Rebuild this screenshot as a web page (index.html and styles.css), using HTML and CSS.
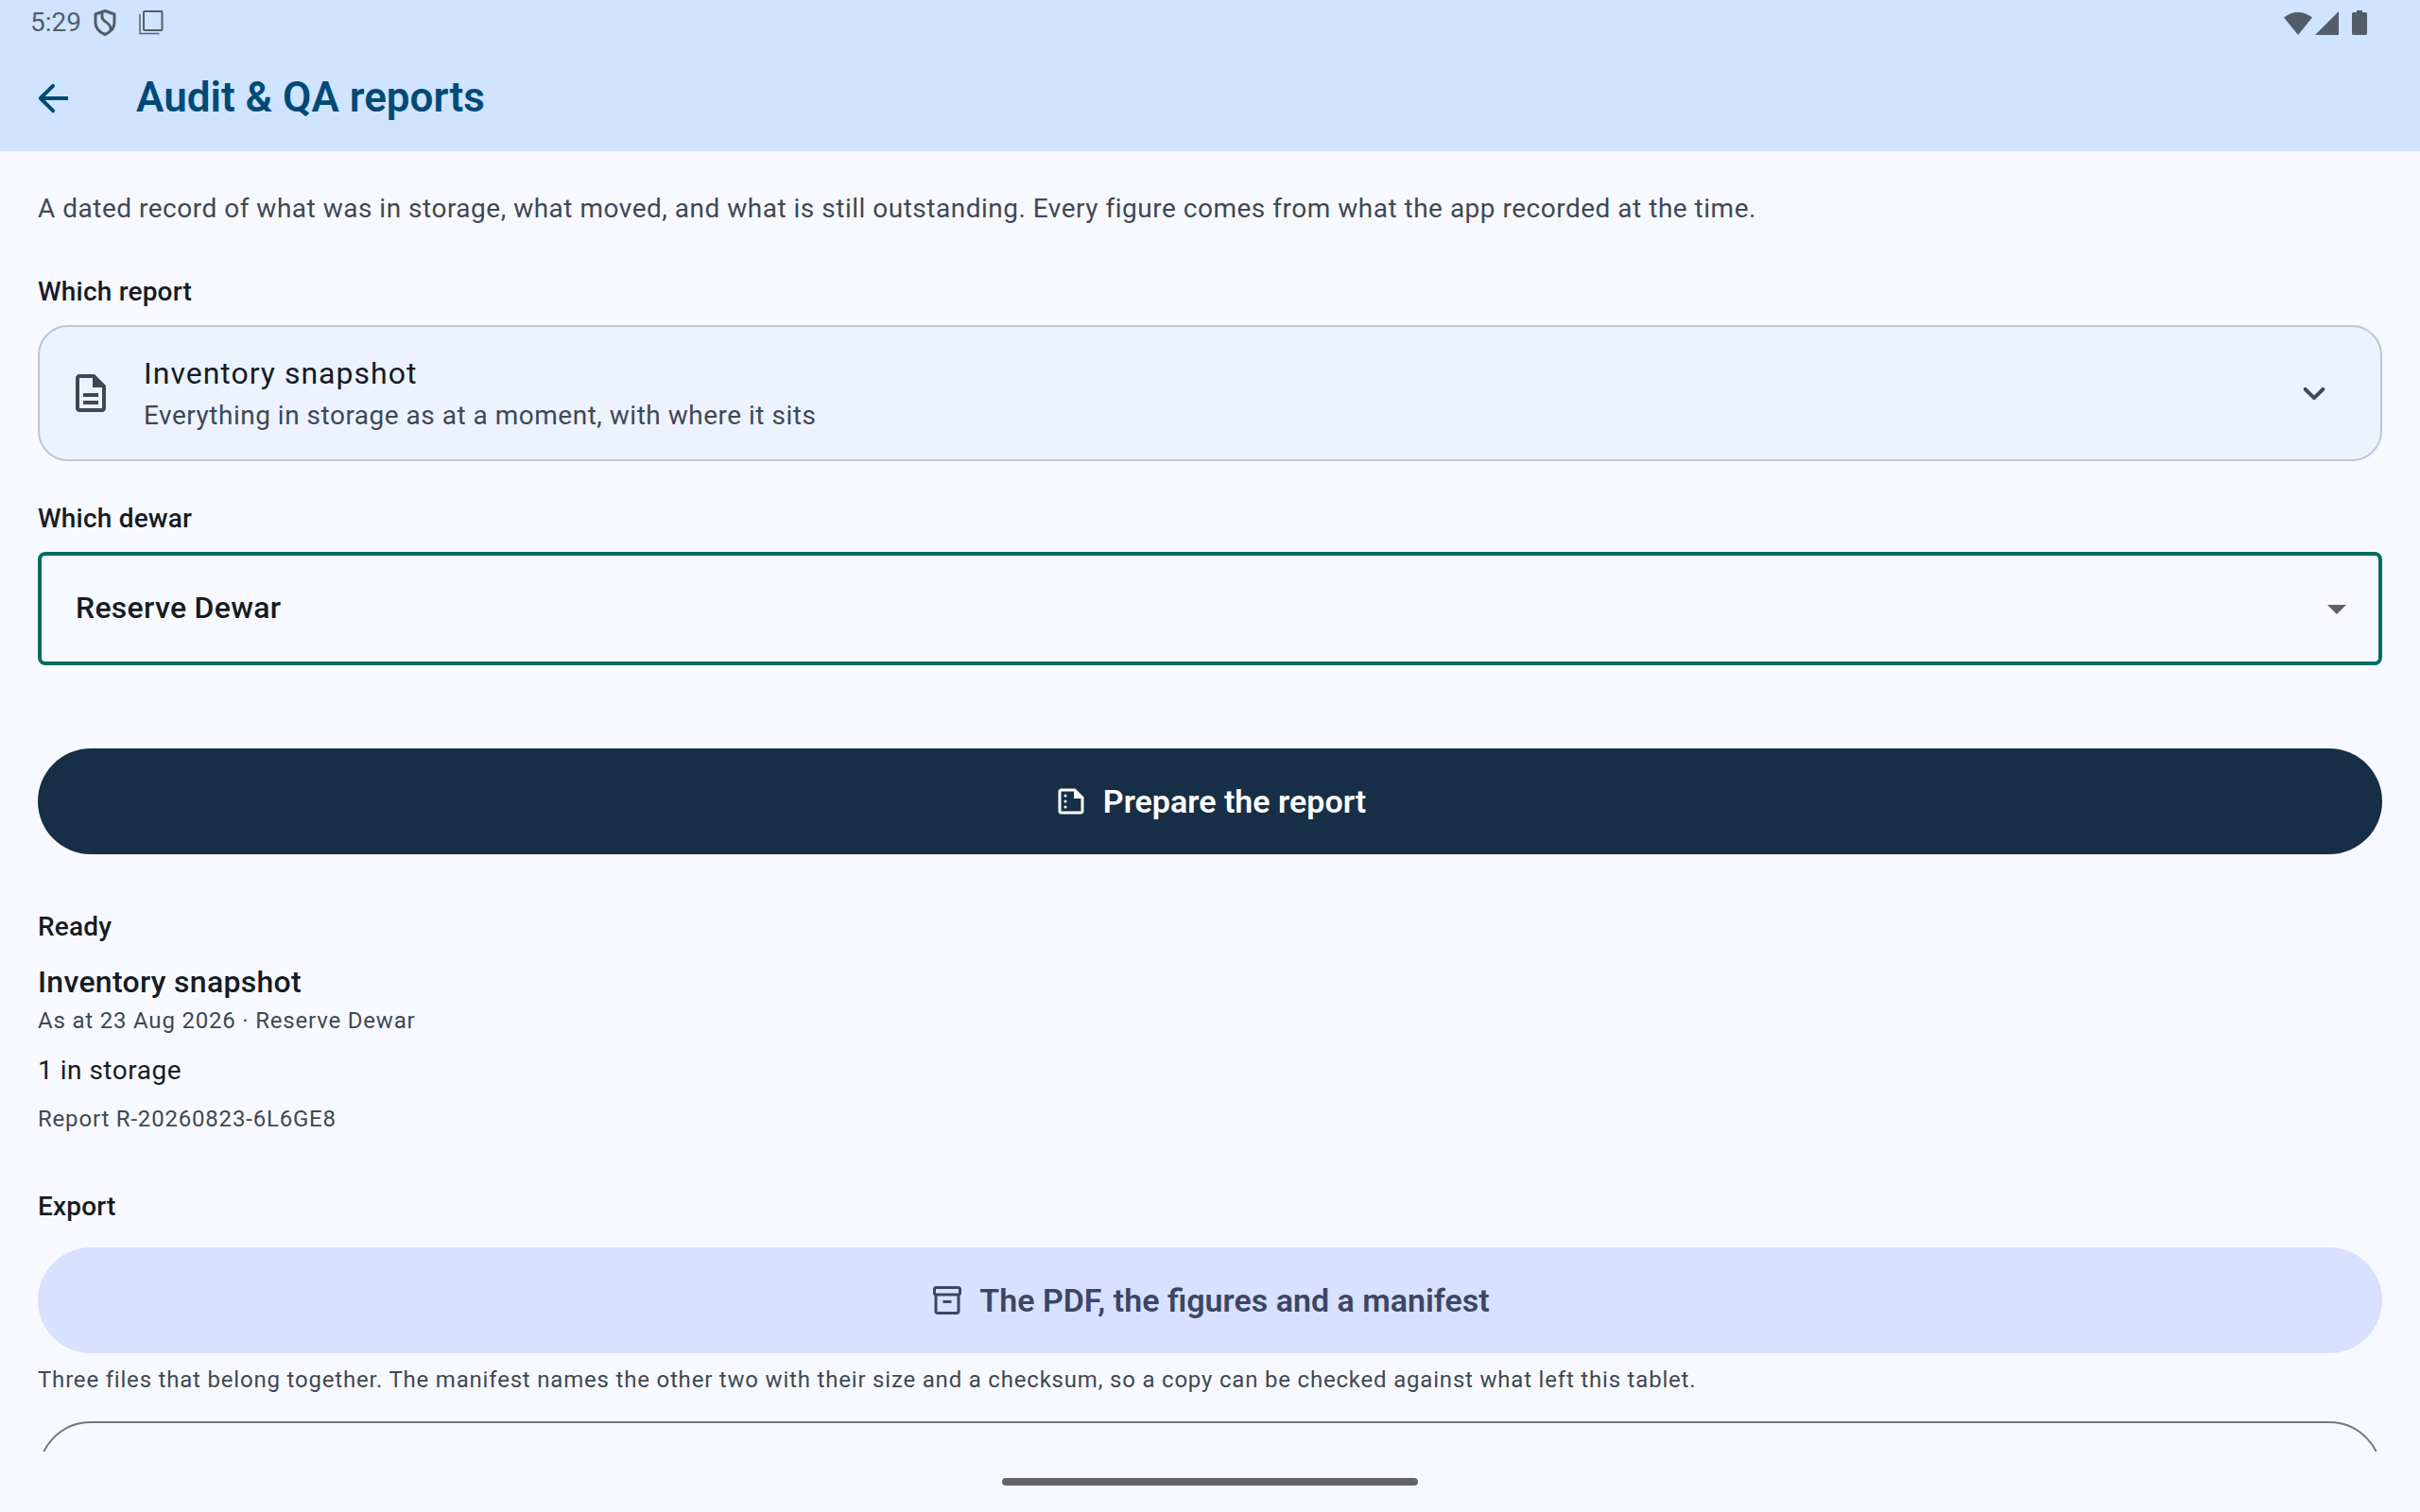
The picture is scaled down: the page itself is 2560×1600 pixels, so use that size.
FILE: index.html
```html
<!DOCTYPE html>
<html lang="en">
<head>
<meta charset="utf-8">
<meta name="viewport" content="width=device-width, initial-scale=1">
<title>Audit &amp; QA reports</title>
<link rel="stylesheet" href="styles.css">
</head>
<body>
<header class="top">
  <div class="status">
    <div class="status-group">
      <span class="clock">5:29</span>
      <svg class="shield" viewBox="0 0 24 28" fill="none" stroke="currentColor" stroke-width="3" stroke-linejoin="round" aria-hidden="true"><path d="M12 1.500 22 5v9c0 5.500-4 10-10 12.500C6 24 2 19.500 2 14V5z"/><path d="M9 3v5c0 5 9 6 9 12v2"/></svg>
      <svg class="copies" viewBox="0 0 26 28" fill="none" stroke="currentColor" aria-hidden="true"><rect x="5" y="2" width="19.500" height="20" rx="1" stroke-width="2"/><path d="M1 5v20.500h20.500" stroke-width="1.500"/></svg>
    </div>
    <div class="status-group signals">
      <svg class="wifi" viewBox="0 0 30 28" fill="currentColor" aria-hidden="true"><path d="M0 8.500C8.500 1 21.500 1 30 8.500L15 27z"/></svg>
      <svg class="cell" viewBox="0 0 26 28" fill="currentColor" aria-hidden="true"><path d="M0 27 25 2v25z"/></svg>
      <svg class="battery" viewBox="0 0 16 28" fill="currentColor" aria-hidden="true"><path d="M5 1h6v2h3.500Q16 3 16 4.500v21q0 1.500-1.500 1.500h-13Q0 27 0 25.500v-21Q0 3 1.500 3H5z"/></svg>
    </div>
  </div>
  <div class="app-bar">
    <button class="back" type="button" aria-label="Back"><svg class="icon" viewBox="0 0 24 24" fill="currentColor"><path d="M19 11H7.830l4.880-4.880c.39-.39.39-1.030 0-1.420a1 1 0 0 0-1.410 0l-6.590 6.590a1 1 0 0 0 0 1.410l6.590 6.590a1 1 0 1 0 1.410-1.410L7.830 13H20v-2z"/></svg></button>
    <h1 class="title">Audit &amp; QA reports</h1>
  </div>
</header>

<main class="content">
  <p class="intro body muted">A dated record of what was in storage, what moved, and what is still outstanding. Every figure comes from what the app recorded at the time.</p>

  <section class="field">
    <h2 class="label" id="report-label">Which report</h2>
    <button class="report-card" type="button" aria-describedby="report-label">
      <svg class="icon" viewBox="0 0 24 24" fill="currentColor" aria-hidden="true"><path d="M8 16h8v2H8zm0-4h8v2H8zm6-10H6c-1.100 0-2 .9-2 2v16c0 1.100.89 2 1.990 2H18c1.100 0 2-.9 2-2V8zm4 18H6V4h7v5h5z"/></svg>
      <span class="report-text">
        <span class="item-title">Inventory snapshot</span>
        <span class="body muted">Everything in storage as at a moment, with where it sits</span>
      </span>
      <svg class="icon" viewBox="0 0 24 24" fill="none" stroke="currentColor" stroke-width="2" stroke-linecap="round" stroke-linejoin="round" aria-hidden="true"><path d="M7.300 9.900 12 14.600l4.700-4.700"/></svg>
    </button>
  </section>

  <section class="field dewar">
    <label class="label" for="dewar">Which dewar</label>
    <div class="select-box">
      <select class="select" id="dewar"><option>Reserve Dewar</option></select>
      <svg class="select-arrow" viewBox="0 0 24 24" fill="currentColor" aria-hidden="true"><path d="m7 10 5 5 5-5z"/></svg>
    </div>
  </section>

  <button class="pill primary" type="button">
    <svg class="pill-icon" viewBox="0 0 24 24" fill="currentColor" aria-hidden="true"><path d="M15 3H5c-1.100 0-2 .9-2 2v14c0 1.100.9 2 2 2h14c1.100 0 2-.9 2-2V9zM5 19V5h9v5h5v9z"/><circle cx="8" cy="8" r="1"/><circle cx="8" cy="12" r="1"/><circle cx="8" cy="16" r="1"/></svg>
    <span>Prepare the report</span>
  </button>

  <section class="ready">
    <h2 class="label">Ready</h2>
    <h3 class="result-title">Inventory snapshot</h3>
    <p class="small muted">As at 23 Aug 2026 · Reserve Dewar</p>
    <p class="body result-count">1 in storage</p>
    <p class="small muted">Report R-20260823-6L6GE8</p>
  </section>

  <section class="export">
    <h2 class="label">Export</h2>
    <button class="pill tonal" type="button">
      <svg class="pill-icon" viewBox="0 0 24 24" fill="currentColor" aria-hidden="true"><path d="M20 2H4c-1 0-2 .9-2 2v3.010c0 .72.43 1.340 1 1.690V20c0 1.100 1.100 2 2 2h14c.9 0 2-.9 2-2V8.700c.57-.35 1-.97 1-1.690V4c0-1.100-1-2-2-2m-1 18H5V9h14zm1-13H4V4h16z"/><path d="M9 12h6v2H9z"/></svg>
      <span>The PDF, the figures and a manifest</span>
    </button>
    <p class="small muted">Three files that belong together. The manifest names the other two with their size and a checksum, so a copy can be checked against what left this tablet.</p>
    <button class="pill outlined" type="button" aria-label="Export the PDF"></button>
  </section>
</main>

<footer class="nav-bar"><span class="handle"></span></footer>
</body>
</html>
```

FILE: styles.css
```css
:root {
  --surface: #f8f9ff;
  --bar: #d0e4ff;
  --on-bar: #004a78;
  --ink: #151c24;
  --muted: #404853;
  --status: #535d6a;
  --focus: #006d63;
}

* {
  box-sizing: border-box;
}

body {
  margin: 0;
  height: 100vh;
  display: flex;
  flex-direction: column;
  overflow: hidden;
  background: var(--surface);
  color: var(--ink);
  font-family: Roboto, "Liberation Sans", sans-serif;
}

h1, h2, h3, p {
  margin: 0;
}

svg {
  display: block;
  flex: none;
}

button, select {
  margin: 0;
  font: inherit;
  color: inherit;
  cursor: pointer;
}

/* Header */
.top {
  flex: none;
  background: var(--bar);
}

.status {
  height: 48px;
  padding: 0 56px 0 32px;
  display: flex;
  justify-content: space-between;
  align-items: center;
  color: var(--status);
}

.status-group {
  display: flex;
  align-items: center;
}

.clock {
  font-size: 28px;
  line-height: 40px;
}

.shield {
  width: 24px;
  height: 28px;
  margin: 0 24px 0 13px;
}

.copies {
  width: 26px;
  height: 28px;
}

.wifi {
  width: 30px;
  height: 28px;
}

.cell {
  width: 26px;
  height: 28px;
  margin: 0 13px 0 3px;
}

.battery {
  width: 16px;
  height: 28px;
}

.app-bar {
  height: 112px;
  padding: 0 32px;
  display: flex;
  align-items: center;
  gap: 64px;
  color: var(--on-bar);
}

.back {
  padding: 0;
  border: 0;
  background: none;
}

.icon {
  width: 48px;
  height: 48px;
}

.title {
  padding-bottom: 2px;
  font-size: 44px;
  line-height: 56px;
  font-weight: 600;
}

/* Text roles */
.body {
  font-size: 28px;
  line-height: 42px;
  letter-spacing: 0.018em;
}

.small {
  font-size: 24px;
  line-height: 32px;
  letter-spacing: 0.0335em;
}

.label {
  display: block;
  font-size: 28px;
  line-height: 42px;
  font-weight: 500;
  letter-spacing: 0.007em;
}

.muted {
  color: var(--muted);
}

/* Content */
.content {
  flex: 1;
  min-height: 0;
  overflow: hidden;
  padding: 40px 40px 0;
}

.intro {
  margin-bottom: 46px;
}

.field {
  display: flex;
  flex-direction: column;
  gap: 14px;
}

.dewar {
  margin: 40px 0 88px;
}

.report-card {
  width: 100%;
  min-height: 144px;
  padding: 24px 46px 24px 30px;
  display: flex;
  align-items: center;
  gap: 32px;
  border: 2px solid #bbc7d6;
  border-radius: 32px;
  background: #ecf3ff;
  color: var(--muted);
  text-align: left;
}

.report-text {
  flex: 1;
  display: flex;
  flex-direction: column;
}

.item-title {
  font-size: 32px;
  line-height: 48px;
  letter-spacing: 1px;
  color: var(--ink);
}

.select-box {
  display: grid;
  align-items: center;
}

.select {
  grid-area: 1 / 1;
  width: 100%;
  height: 120px;
  padding: 0 36px 2px;
  appearance: none;
  border: 4px solid var(--focus);
  border-radius: 8px;
  outline: none;
  background: transparent;
  font-size: 32px;
  line-height: 48px;
  font-weight: 500;
  letter-spacing: 0.009em;
}

.select-arrow {
  grid-area: 1 / 1;
  justify-self: end;
  width: 48px;
  height: 48px;
  margin-right: 24px;
  color: #616161;
  pointer-events: none;
}

.pill {
  width: 100%;
  height: 112px;
  display: flex;
  align-items: center;
  justify-content: center;
  gap: 16px;
  border: 0;
  border-radius: 56px;
  font-size: 34px;
  line-height: 48px;
  font-weight: 600;
}

.pill-icon {
  width: 36px;
  height: 36px;
}

.primary {
  background: #162f46;
  color: #ffffff;
}

.tonal {
  margin: 22px 0 12px;
  background: #d8e1ff;
  color: #3c4664;
}

.outlined {
  margin-top: 28px;
  border: 2px solid #707884;
  background: transparent;
}

.ready, .export {
  margin-top: 56px;
}

.result-title {
  margin: 14px 0 2px;
  font-size: 32px;
  line-height: 46px;
  font-weight: 500;
  letter-spacing: 0.009em;
}

.result-count {
  margin: 16px 0 14px;
}

/* Gesture bar */
.nav-bar {
  flex: none;
  height: 64px;
  display: flex;
  align-items: center;
  justify-content: center;
}

.handle {
  width: 440px;
  height: 8px;
  border-radius: 4px;
  background: #636467;
}
```
